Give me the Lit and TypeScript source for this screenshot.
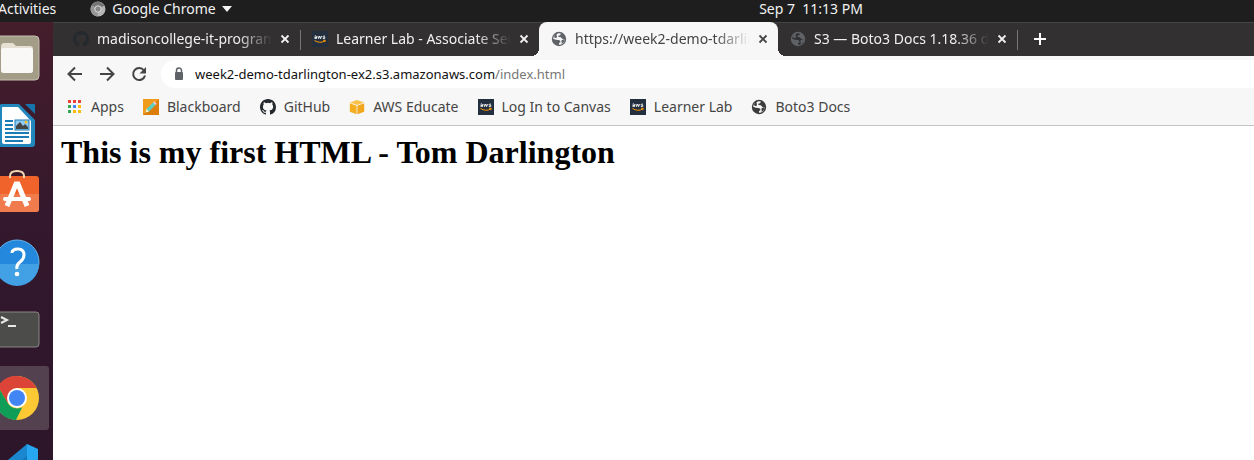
import { LitElement, html, css, svg } from "lit";
import { customElement } from "lit/decorators.js";

const github = html`<svg class="i16" viewBox="0 0 16 16" fill="#24292e"><path d="M8 0C3.58 0 0 3.58 0 8c0 3.54 2.29 6.53 5.47 7.59.4.07.55-.17.55-.38 0-.19-.01-.82-.01-1.49-2.01.37-2.53-.49-2.69-.94-.09-.23-.48-.94-.82-1.13-.28-.15-.68-.52-.01-.53.63-.01 1.08.58 1.23.82.72 1.21 1.87.87 2.33.66.07-.52.28-.87.51-1.07-1.78-.2-3.64-.89-3.64-3.95 0-.87.31-1.59.82-2.15-.08-.2-.36-1.02.08-2.12 0 0 .67-.21 2.2.82a7.6 7.6 0 0 1 4 0c1.53-1.04 2.2-.82 2.2-.82.44 1.1.16 1.92.08 2.12.51.56.82 1.27.82 2.15 0 3.07-1.87 3.75-3.65 3.95.29.25.54.73.54 1.48 0 1.07-.01 1.93-.01 2.2 0 .21.15.46.55.38A8.01 8.01 0 0 0 16 8c0-4.42-3.58-8-8-8z"/></svg>`;
const globe = (color: string, land = "#f7f7f7") => html`<svg class="i16" viewBox="0 0 16 16"><circle cx="8" cy="8" r="7.2" fill=${color}/><path d="M9.800 2.400C9.600 4 8.800 4.600 7.400 4.600V6q2.600-.2 3.600 1.400 1 1.200 2.800.8A5.800 5.800 0 0 1 8 13.800v-1.900q1.600-.1 1.500-1.500-.2-1.300-2-1.400-2.700 0-5.300-1.200.1-2.300 1.600-3.900l1.400 1.400Q5 3.400 6.600 2.400 8.200 2 9.800 2.400z" fill=${land}/><path d="M2.800 6.200q.6-2 2-2.900L6 5.200 5.400 7.200zM10.500 9.200l3.300-1.200-.6 2.600-2.500 2.400z" fill=${color}/></svg>`;
const aws = html`<svg class="i16" viewBox="0 0 16 16"><rect width="16" height="16" fill="#232f3e"/><path d="M2.600 5.200q1.800-.9 1.900.5v2M4.400 6.400q-2-.1-2 .7t2 .1M5.800 5l.8 2.600L7.600 5l1 2.600L9.500 5M13 5.200q-2-.5-2 .4t1 .6 1 .9-2.200.3" fill="none" stroke="#fff" stroke-width=".9"/><path d="M2.500 9.500q5.400 3.300 10.200.5M11.200 9.300l2.100.1-.5 1.800" fill="none" stroke="#f90" stroke-width="1"/></svg>`;
const cross = html`<svg class="i16" viewBox="0 0 16 16"><path d="M4.500 4.500l7 7m0-7l-7 7" stroke="currentColor" stroke-width="1.800"/></svg>`;
const gridColors = [["#ea4335", "#ea4335", "#ea4335"], ["#34a853", "#4285f4", "#fbbc05"], ["#34a853", "#fbbc05", "#fbbc05"]];
const appsGrid = html`<svg class="i16" viewBox="0 0 16 16">${gridColors.map((row, r) => row.map((fill, c) => svg`<rect x=${1 + c * 5} y=${1 + r * 5} width="3" height="3" fill=${fill}/>`))}</svg>`;
const pencil = html`<svg class="i16" viewBox="0 0 16 16"><rect width="16" height="16" fill="#f29a1a"/><path d="M0 16 16 0v16z" fill="#dd7d0c"/><path d="M2.500 13.500l1-3.500 7-7 2.500 2.500-7 7z" fill="#5fd0c0"/><path d="M2.500 13.500l1-3.500 2.500 2.500z" fill="#fff0c8"/><path d="M10 3.500l1.300-1.300 2.500 2.500L12.500 6z" fill="#f6c6cf"/></svg>`;
const cube = html`<svg class="i16" viewBox="0 0 16 16"><path d="M1 3.500 8 1l7 2.500L8 6z" fill="#f9c34a"/><path d="M.8 4.300 7.600 6.700v8.500L.8 12.800z" fill="#f4ae22"/><path d="M15.200 4.300 8.400 6.700v8.500l6.800-2.400z" fill="#f0a71c"/></svg>`;

const docks = [
  { name: "Files", art: svg`<rect x="-5" y="12" width="44" height="44" rx="4" fill="#a39c87" stroke="#c4bfae"/><path d="M1 23q0-4 3-4h9l3 3h14q3 0 3 3v21q0 3-3 3H4q-3 0-3-3z" fill="#e6dfd3"/><rect x="1" y="24" width="32" height="25" rx="3" fill="#faf8f6"/>` },
  { name: "LibreOffice Writer", art: svg`<path d="M-1 15q0-3 3-3h17l16 16v24q0 3-3 3H2q-3 0-3-3z" fill="#2287bd"/><path d="M2 16q0-1 1-1h15l13 14v21q0 2-2 2H4q-2 0-2-2z" fill="#fff"/><path d="M25 12h9q1 0 1 1v9z" fill="#1675ad"/><path d="M5 29h8m-8 4h8m-8 4h8m-8 4h24m-24 4h24m-24 4h18" stroke="#1c7cb5" stroke-width="2"/><rect x="15" y="28" width="14" height="10" fill="#8ecbf0" stroke="#1c7cb5"/><path d="M16 37v-3l4-4 3 4 2-2 3 3v2z" fill="#444"/><circle cx="26" cy="30" r="1.500" fill="#f5bd32"/>` },
  { name: "Ubuntu Software", art: svg`<rect x="-5" y="16" width="44" height="36" rx="3" fill="#f0642c"/><path d="M-5 34h44v15q0 3-3 3H-5z" fill="#f07b4d"/><path d="M10 18v-2q0-5 7-5t7 5v2" fill="none" stroke="#f4d9b0" stroke-width="2"/><path d="M7 46 16 24h2l9 22" fill="none" stroke="#fff" stroke-width="5"/><path d="M5 39h24" stroke="#fff" stroke-width="4" stroke-linecap="round"/>` },
  { name: "Help", art: svg`<circle cx="17" cy="34" r="22" fill="#2488dc" stroke="#67b6ee"/><path d="M-5 36h44a22 22 0 0 1-44 0z" fill="#42a0e4"/><path d="M12 25q0-4 6-4t6 6q0 4-4 7t-3 7" fill="none" stroke="#fff" stroke-width="3"/><circle cx="17" cy="46" r="2.300" fill="#fff"/>` },
  { name: "Terminal", art: svg`<rect x="-5" y="16" width="44" height="35" rx="3" fill="#4c4c4b" stroke="#8a8785"/><path d="M1 21l6 3-6 3M8 30h8" fill="none" stroke="#e8e8e8" stroke-width="2"/>` },
  { name: "Google Chrome", art: svg`<rect x="-8" y="2" width="57" height="64" rx="3" fill="#544150"/><circle cx="17" cy="34" r="22" fill="#fcc934"/><path d="M-2 22.500A22 22 0 0 1 36.500 24H17L7.500 39z" fill="#db4437"/><path d="M-2 22.500 8 39.500q5 7 14 4L16 56A22 22 0 0 1-2 22.500z" fill="#0f9d58"/><circle cx="17" cy="34" r="10" fill="#fff"/><circle cx="17" cy="34" r="8" fill="#4285f4"/>` },
  { name: "Visual Studio Code", art: svg`<path d="M-5 26 12 38 27 12v40H-5z" fill="#1174b9"/><path d="M27 12l11 5v40H27z" fill="#27a7f1"/><path d="M27 12v12L4 44l-8-6z" fill="#1a87cf"/>` },
];

@customElement("app-root")
export class AppRoot extends LitElement {
  static styles = css`
    :host { display: flex; flex-direction: column; height: 100vh; overflow: hidden; background: #fff; font: 14px/20px "Noto Sans", sans-serif; }
    button { border: 0; padding: 0; margin: 0; background: none; font: inherit; line-height: inherit; color: inherit; display: flex; align-items: center; }
    svg { display: block; flex: none; }
    .i16 { width: 16px; height: 16px; }
    .top { display: grid; grid-template-columns: 66fr auto 34fr; height: 22px; background: #1e1e1e; color: #f2f2f2; line-height: 18px; align-items: start; flex: none; }
    .left { display: flex; gap: 34px; margin-left: -2px; }
    .menu { gap: 6px; }
    .main { display: flex; flex: 1; min-height: 0; }
    .dock { width: 53px; flex: none; background: linear-gradient(#451d2b, #34182d 45%, #2d1629); padding-top: 2px; box-sizing: border-box; overflow: hidden; }
    .win { flex: 1; min-width: 0; display: flex; flex-direction: column; }
    .tabs { display: flex; height: 34px; background: #333031; padding-left: 8px; color: #f0f0f0; box-shadow: inset 0 1px #464344; }
    .tab { display: flex; align-items: center; width: 239px; box-sizing: border-box; padding: 0 7px 0 12px; position: relative; }
    .tab.sep::after { content: ""; position: absolute; right: -1px; top: 8px; height: 20px; width: 1px; background: #777; }
    .tab.active { background: #f7f7f7; color: #444; border-radius: 8px 8px 0 0; }
    .tab.active::before, .tab.active::after { content: ""; position: absolute; bottom: 0; width: 8px; height: 8px; }
    .tab.active::before { right: 100%; background: radial-gradient(circle at 0 0, #333031 8px, #f7f7f7 8px); }
    .tab.active::after { left: 100%; background: radial-gradient(circle at 100% 0, #333031 8px, #f7f7f7 8px); }
    .title { flex: 1; min-width: 0; margin: 0 5px 0 8px; overflow: hidden; white-space: nowrap; mask-image: linear-gradient(90deg, #000 80%, transparent); text-align: left; }
    .plus { margin-left: 15px; }
    .nav { display: flex; align-items: center; height: 36px; background: #f7f7f7; padding: 0 0 0 14px; gap: 16px; color: #444; }
    .pill { flex: 1; height: 28px; background: #fff; border-radius: 14px 0 0 14px; display: flex; align-items: center; gap: 8px; padding-left: 10px; margin-left: -2px; white-space: nowrap; color: #111; font-size: 13px; }
    .pill a { color: inherit; text-decoration: none; }
    .path { color: #777; }
    .marks { display: flex; height: 34px; box-sizing: border-box; align-items: center; background: #f7f7f7; border-bottom: 1px solid #c4c4c4; padding: 0 0 4px 14px; gap: 19px; color: #454545; }
    .marks a { display: flex; gap: 8px; align-items: center; color: inherit; text-decoration: none; white-space: nowrap; }
    h1 { font: bold 32px/37px "Liberation Serif", serif; margin: 8px; color: #000; }
  `;

  tab(icon: unknown, title: string, cls = "") {
    return html`<div class="tab ${cls}">${icon}<span class="title">${title}</span><button aria-label="Close tab">${cross}</button></div>`;
  }

  render() {
    const marks: [unknown, string][] = [[appsGrid, "Apps"], [pencil, "Blackboard"], [github, "GitHub"], [cube, "AWS Educate"], [aws, "Log In to Canvas"], [aws, "Learner Lab"], [globe("#3c3c3c"), "Boto3 Docs"]];
    return html`
      <header class="top">
        <div class="left"><button>Activities</button><button class="menu"><svg class="i16" viewBox="0 0 16 16"><circle cx="8" cy="8" r="7.500" fill="#b5b5b5"/><path d="M8 8 1.500 4.500A7.500 7.500 0 0 1 14.500 4.500z" fill="#777"/><path d="M8 8 1.500 4.500A7.500 7.500 0 0 0 7.500 15.500z" fill="#969696"/><circle cx="8" cy="8" r="3.200" fill="#888" stroke="#ddd"/></svg>Google Chrome<svg width="10" height="6" viewBox="0 0 10 6"><path d="M0 0h10L5 6z" fill="#f2f2f2"/></svg></button></div>
        <time>Sep 7&nbsp; 11:13 PM</time>
      </header>
      <div class="main">
        <nav class="dock">${docks.map(d => html`<button aria-label=${d.name}><svg width="53" height="68" viewBox="0 0 53 68">${d.art}</svg></button>`)}</nav>
        <div class="win">
          <div class="tabs">
            ${this.tab(github, "madisoncollege-it-programs", "sep")}
            ${this.tab(aws, "Learner Lab - Associate Services")}
            ${this.tab(globe("#5f6368"), "https://week2-demo-tdarlington", "active")}
            ${this.tab(globe("#5f6368", "#333031"), "S3 — Boto3 Docs 1.18.36 documentation", "sep")}
            <button class="plus" aria-label="New tab"><svg class="i16" viewBox="0 0 16 16"><path d="M8 2v12M2 8h12" stroke="#fff" stroke-width="2"/></svg></button>
          </div>
          <div class="nav">
            <button aria-label="Back"><svg class="i16" viewBox="0 0 16 16"><path d="M15 8H2M8 1.500 1.500 8 8 14.500" fill="none" stroke="#444" stroke-width="2"/></svg></button>
            <button aria-label="Forward"><svg class="i16" viewBox="0 0 16 16"><path d="M1 8h13M8 1.500 14.500 8 8 14.500" fill="none" stroke="#444" stroke-width="2"/></svg></button>
            <button aria-label="Reload"><svg class="i16" viewBox="0 0 16 16"><path d="M13 4.500A6 6 0 1 0 14 9.500" fill="none" stroke="#444" stroke-width="2"/><path d="M15 1v6.500H8.500z" fill="#444"/></svg></button>
            <div class="pill"><svg class="i16" viewBox="0 0 16 16"><rect x="4" y="6" width="8" height="8" rx="1" fill="#5f6368"/><path d="M5.500 7V4.500a2.500 2.500 0 0 1 5 0V7" fill="none" stroke="#5f6368" stroke-width="1.500"/></svg><a href="#">week2-demo-tdarlington-ex2.s3.amazonaws.com<span class="path">/index.html</span></a></div>
          </div>
          <div class="marks">${marks.map(([i, t]) => html`<a href="#">${i}<span>${t}</span></a>`)}</div>
          <main><h1>This is my first HTML - Tom Darlington</h1></main>
        </div>
      </div>`;
  }
}
